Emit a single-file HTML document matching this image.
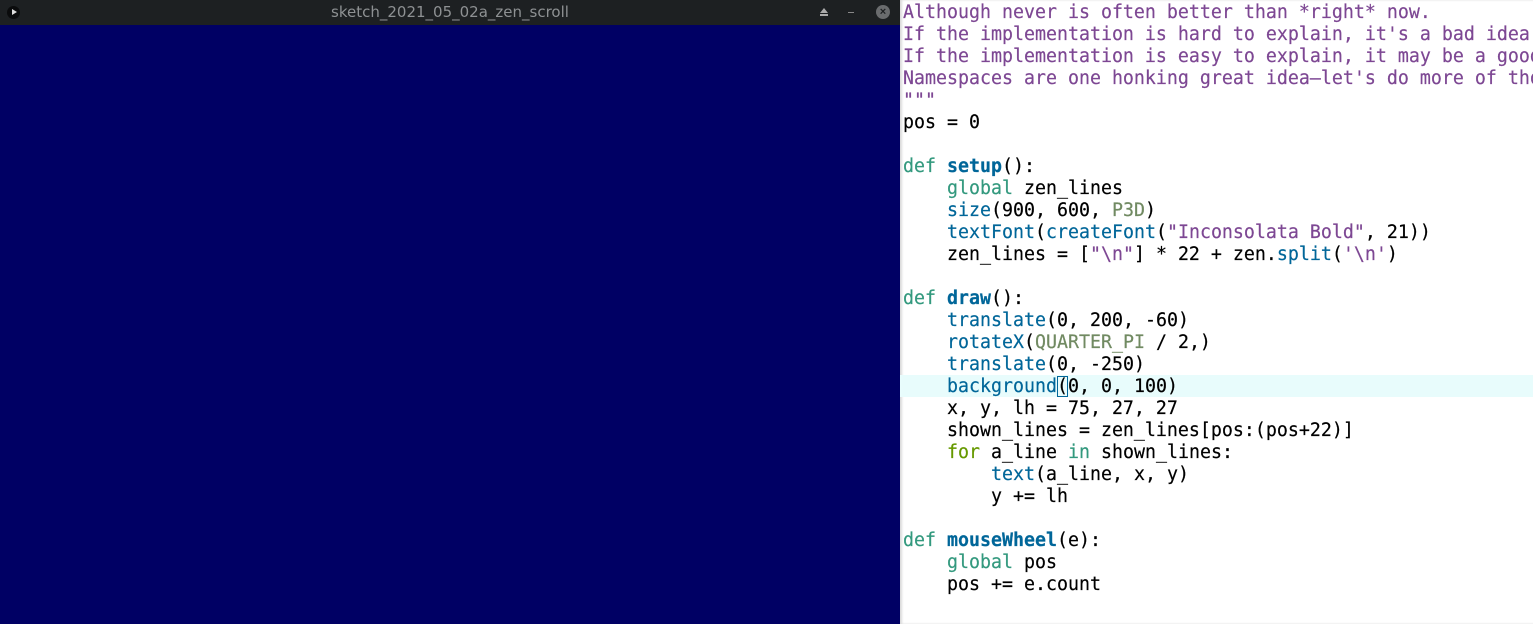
<!DOCTYPE html>
<html><head><style>
html,body{margin:0;padding:0;width:1533px;height:624px;overflow:hidden;background:#fff;}
#win{position:absolute;left:0;top:0;width:900px;height:624px;background:#000064;}
#title{position:absolute;left:0;top:0;width:900px;height:25px;background:#1d2022;color:#8e9193;font:15px "DejaVu Sans","Liberation Sans",sans-serif;text-align:center;line-height:25px;}
#ed{position:absolute;left:900px;top:0;width:633px;height:624px;background:#fff;box-shadow:inset 2px 0 2px rgba(0,0,0,0.15);}
pre{margin:0;position:absolute;left:3px;top:2px;font-family:"DejaVu Sans Mono","Liberation Mono",monospace;font-size:18.27px;line-height:22px;color:#000;white-space:pre;-webkit-text-stroke:0.2px;}
.s{color:#7d4793}.k{color:#33997e}.f{color:#006699;font-weight:bold}.b{color:#006699}.c{color:#718a62}.g{color:#669900}
#hl{position:absolute;left:0;top:375px;width:633px;height:22px;background:#e8fcfc;}
.cur{outline:1px solid #006699;outline-offset:-1px}
</style></head><body>
<div id="win"><div id="title">sketch_2021_05_02a_zen_scroll</div>
<div style="position:absolute;left:7px;top:6px;width:13px;height:13px;border-radius:50%;background:#0a0b0c"></div>
<div style="position:absolute;left:12px;top:9px;width:0;height:0;border-left:5px solid #ddd;border-top:3.5px solid transparent;border-bottom:3.5px solid transparent"></div>
<div style="position:absolute;left:820px;top:8px;width:0;height:0;border-bottom:5px solid #aaa;border-left:4px solid transparent;border-right:4px solid transparent"></div>
<div style="position:absolute;left:820px;top:14px;width:8px;height:2px;background:#aaa"></div>
<div style="position:absolute;left:848px;top:12px;width:6px;height:1px;background:#888"></div>
<div style="position:absolute;left:876px;top:5px;width:14px;height:14px;border-radius:50%;background:#6a6c6e;color:#1d2022;font:bold 11px sans-serif;text-align:center;line-height:14px">×</div>
</div>
<div id="ed"><div id="hl"></div>
<pre><span class="s">Although never is often better than *right* now.
If the implementation is hard to explain, it's a bad idea.
If the implementation is easy to explain, it may be a good idea.
Namespaces are one honking great idea—let's do more of those!
"""</span>
pos = 0

<span class="k">def</span> <span class="f">setup</span>():
    <span class="k">global</span> zen_lines
    <span class="b">size</span>(900, 600, <span class="c">P3D</span>)
    <span class="b">textFont</span>(<span class="b">createFont</span>(<span class="s">"Inconsolata Bold"</span>, 21))
    zen_lines = [<span class="s">"\n"</span>] * 22 + zen.<span class="b">split</span>(<span class="s">'\n'</span>)

<span class="k">def</span> <span class="f">draw</span>():
    <span class="b">translate</span>(0, 200, -60)
    <span class="b">rotateX</span>(<span class="c">QUARTER_PI</span> / 2,)
    <span class="b">translate</span>(0, -250)
    <span class="b">background</span><span class="cur">(</span>0, 0, 100)
    x, y, lh = 75, 27, 27
    shown_lines = zen_lines[pos:(pos+22)]
    <span class="g">for</span> a_line <span class="k">in</span> shown_lines:
        <span class="b">text</span>(a_line, x, y)
        y += lh

<span class="k">def</span> <span class="f">mouseWheel</span>(e):
    <span class="k">global</span> pos
    pos += e.count
</pre></div>
</body></html>
